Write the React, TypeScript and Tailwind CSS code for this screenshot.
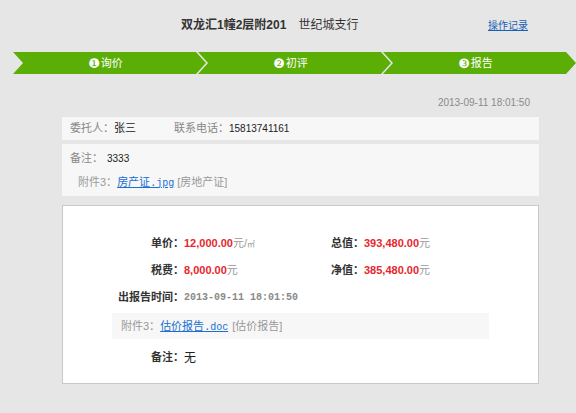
const cjk = "font-['Liberation_Sans','Noto_Sans_CJK_SC',sans-serif]";

const steps = [
  { num: "❶", label: "询价" },
  { num: "❷", label: "初评" },
  { num: "❸", label: "报告" },
];

const StepBar = () => {
  return (
    <div className="flex h-[22px] pl-[13px]">
      {steps.map((step, i) => (
        <div
          key={step.label}
          className={`flex w-[193px] items-center justify-center bg-[#5aae06] pr-[8px] text-[11px] text-white [clip-path:polygon(0_0,calc(100%-10px)_0,100%_50%,calc(100%-10px)_100%,0_100%,10px_50%)] ${
            i > 0 ? "-ml-[8px]" : ""
          }`}
        >
          <span className="mr-[1px] font-['DejaVu_Sans'] text-[13px] leading-none">{step.num}</span>
          <span>{step.label}</span>
        </div>
      ))}
    </div>
  );
};

const ValueRow = ({
  label,
  value,
  unit,
  label2,
  value2,
}: {
  label: string;
  value: string;
  unit: React.ReactNode;
  label2: string;
  value2: string;
}) => (
  <div className="flex h-[27px] items-center text-[11px]">
    <span className="w-[121px] text-right font-bold text-[#333]">{label}</span>
    <span className="w-[147px]">
      <span className="font-['Liberation_Sans'] font-bold text-[#e8262c]">{value}</span>
      <span className="text-[#999]">{unit}</span>
    </span>
    <span className="font-bold text-[#333]">{label2}</span>
    <span className="font-['Liberation_Sans'] font-bold text-[#e8262c]">{value2}</span>
    <span className="text-[#999]">元</span>
  </div>
);

export default function App() {
  return (
    <div className={`h-[413px] w-[576px] overflow-hidden bg-[#e6e6e6] text-[12px] ${cjk}`}>
      {/* header */}
      <div className="flex h-[52px] items-center pb-[2px]">
        <div className="ml-[181px] flex items-center text-[12px] text-[#333]">
          <span className="font-bold">双龙汇1幢2层附201</span>
          <span className="ml-[12px]">世纪城支行</span>
        </div>
        <a href="#" className="ml-auto mr-[48px] text-[10px] text-[#1a5fb4] underline">
          操作记录
        </a>
      </div>

      <StepBar />

      {/* time */}
      <div className="mt-[21px] flex justify-end pr-[46px] font-['Liberation_Sans'] text-[10px] text-[#8a8a8a]">
        2013-09-11 18:01:50
      </div>

      <div className="ml-[62px] mt-[7px] w-[477px]">
        <div className="flex h-[23px] items-center bg-[#f7f7f7] pl-[8px] text-[11px]">
          <span className="text-[#888]">委托人：</span>
          <span className="text-[#222]">张三</span>
          <span className="ml-[38px] text-[#888]">联系电话：</span>
          <span className="font-['Liberation_Sans'] text-[10px] text-[#222]">15813741161</span>
        </div>

        <div className="mt-[4px] h-[52px] bg-[#f7f7f7] pl-[8px] pt-[6px] text-[11px]">
          <div className="flex items-center">
            <span className="text-[#888]">备注：</span>
            <span className="ml-[4px] font-['Liberation_Sans'] text-[10px] text-[#222]">3333</span>
          </div>
          <div className="mt-[7px] flex items-center pl-[8px]">
            <span className="text-[#999]">附件3：</span>
            <a href="#" className="text-[#1a6fd0] underline">
              房产证<span className="font-['Liberation_Mono'] text-[10px]">.jpg</span>
            </a>
            <span className="ml-[3px] text-[#999]">[房地产证]</span>
          </div>
        </div>

        {/* report */}
        <div className="mt-[9px] h-[179px] border border-[#c9c9c9] bg-white pt-[24px]">
          <ValueRow
            label="单价："
            value="12,000.00"
            unit={
              <>
                元/<span className="text-[8px]">㎡</span>
              </>
            }
            label2="总值："
            value2="393,480.00"
          />
          <ValueRow label="税费：" value="8,000.00" unit="元" label2="净值：" value2="385,480.00" />
          <div className="flex h-[26px] items-center text-[11px]">
            <span className="w-[121px] text-right font-bold text-[#333]">出报告时间：</span>
            <span className="font-['Liberation_Mono'] text-[10px] font-bold text-[#8a8a8a]">
              2013-09-11 18:01:50
            </span>
          </div>
          <div className="ml-[49px] mt-[3px] flex h-[26px] w-[377px] items-center bg-[#f7f7f7] pl-[9px] text-[11px]">
            <span className="text-[#999]">附件3：</span>
            <a href="#" className="text-[#1a6fd0] underline">
              估价报告<span className="font-['Liberation_Mono'] text-[10px]">.doc</span>
            </a>
            <span className="ml-[4px] text-[#999]">[估价报告]</span>
          </div>
          <div className="mt-[5px] flex h-[27px] items-center text-[11px]">
            <span className="w-[121px] text-right font-bold text-[#333]">备注：</span>
            <span className="text-[12px] text-[#222]">无</span>
          </div>
        </div>
      </div>
    </div>
  );
}
